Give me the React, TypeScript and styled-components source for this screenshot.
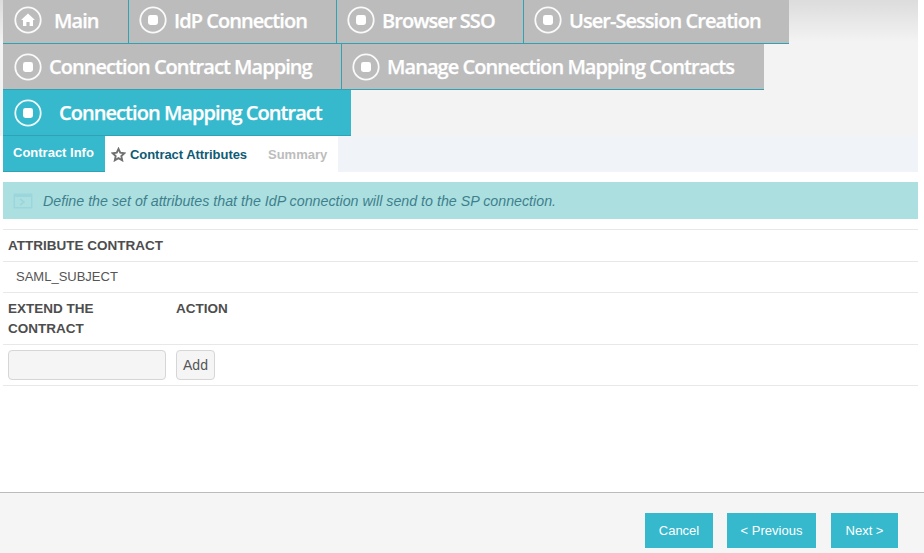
import React from "react";
import styled, { createGlobalStyle } from "styled-components";

const GlobalStyle = createGlobalStyle`
  html, body {
    margin: 0;
    padding: 0;
    background: #fff;
    font-family: "Liberation Sans", Arial, sans-serif;
    color: #555;
  }
`;

const Page = styled.div`
  width: 924px;
  height: 553px;
  display: flex;
  flex-direction: column;
  overflow: hidden;
`;

const Main = styled.div`
  width: 918px;
  height: 492px;
  box-sizing: border-box;
  padding-left: 3px;
`;

const NavArea = styled.div`
  width: 915px;
  margin-left: -3px;
  padding-left: 3px;
  background: linear-gradient(#dcdcdc 0, #f3f3f3 42px);
`;

const NavRow = styled.div<{ $h: number; $lift?: number }>`
  display: flex;
  height: ${(p) => p.$h}px;
  > div {
    padding-bottom: ${(p) => p.$lift ?? 0}px;
  }
`;

const NavTab = styled.div<{ $w: number; $active?: boolean; $gap?: number; $pad?: number }>`
  width: ${(p) => p.$w}px;
  box-sizing: border-box;
  display: flex;
  align-items: center;
  padding-left: ${(p) => p.$pad ?? 11}px;
  gap: ${(p) => p.$gap ?? 7}px;
  background: ${(p) => (p.$active ? "#36b8cd" : "#bcbcbc")};
  border-bottom: 1px solid #2fa2b4;
  border-right: 1px solid #2fa2b4;
  color: #fff;
  font-family: "Open Sans", sans-serif;
  font-weight: 600;
  font-size: 20px;
  letter-spacing: -0.95px;
  -webkit-text-stroke: 0.25px #fff;
  white-space: nowrap;
  &:last-child {
    border-right: none;
  }
`;

const RoundIcon = styled.svg`
  width: 28px;
  height: 28px;
  flex: none;
`;

const StopIcon = () => (
  <RoundIcon viewBox="0 0 28 28">
    <circle cx="14" cy="14" r="12.7" fill="none" stroke="#fff" strokeWidth="1.8" opacity="0.92" />
    <rect x="9" y="9" width="10" height="10" rx="2.4" fill="#fff" />
  </RoundIcon>
);

const HomeIcon = () => (
  <RoundIcon viewBox="0 0 28 28">
    <circle cx="14" cy="14" r="12.7" fill="none" stroke="#fff" strokeWidth="1.8" opacity="0.92" />
    <path d="M14 7.6 L21 14 H19 V20 H15.6 V16 H12.4 V20 H9 V14 H7 Z" fill="#fff" />
  </RoundIcon>
);

const TabBar = styled.div`
  display: flex;
  height: 36px;
  background: #f0f3f8;
`;

const SubTab = styled.div`
  display: flex;
  align-items: center;
  box-sizing: border-box;
  font-weight: 700;
  font-size: 13px;
  white-space: nowrap;
  background: #fff;
  color: #bdbdbd;
`;

const DoneTab = styled(SubTab)`
  width: 102px;
  padding: 0 0 2px 10px;
  background: #36b8cd;
  border-bottom: 1px solid #2fa2b4;
  color: #fff;
`;

const CurrentTab = styled(SubTab)`
  width: 154px;
  padding: 1px 0 0 6px;
  gap: 4px;
  color: #0f5b75;
  letter-spacing: -0.05px;
`;

const PendingTab = styled(SubTab)`
  width: 79px;
  padding: 1px 0 0 9px;
`;

const Banner = styled.div`
  margin-top: 10px;
  height: 37px;
  display: flex;
  align-items: center;
  gap: 10px;
  padding-left: 10px;
  background: #ace0e0;
  color: #3f7f8d;
  font-size: 14.25px;
  font-style: italic;
`;

const Table = styled.div`
  margin-top: 10px;
  border-top: 1px solid #e8e8e8;
`;

const Row = styled.div<{ $h: number }>`
  display: flex;
  height: ${(p) => p.$h}px;
  box-sizing: border-box;
  border-bottom: 1px solid #e8e8e8;
  font-size: 13px;
`;

const Th = styled.div<{ $w?: number }>`
  width: ${(p) => p.$w ?? 168}px;
  box-sizing: border-box;
  padding: 6px 5px 0;
  font-size: 13.5px;
  font-weight: 700;
  line-height: 20px;
  color: #4d4d4d;
  white-space: pre-line;
`;

const Td = styled.div`
  padding: 7px 13px 0;
  line-height: 16px;
  color: #555;
`;

const InputCell = styled.div`
  width: 173px;
  box-sizing: border-box;
  padding: 5px 0 0 5px;
`;

const TextInput = styled.input`
  display: block;
  width: 158px;
  height: 30px;
  box-sizing: border-box;
  background: #f5f5f5;
  border: 1px solid #d6d6d6;
  border-radius: 4px;
`;

const AddButton = styled.button`
  margin-top: 5px;
  width: 39px;
  height: 30px;
  padding: 0;
  box-sizing: border-box;
  background: #f5f5f5;
  border: 1px solid #d6d6d6;
  border-radius: 4px;
  color: #555;
  font-family: "Liberation Sans", Arial, sans-serif;
  font-size: 14px;
`;

const Footer = styled.div`
  flex: 1;
  display: flex;
  justify-content: flex-end;
  gap: 14px;
  padding: 20px 26px 0 0;
  background: #f5f5f5;
  border-top: 1px solid #bbb;
`;

const FooterButton = styled.button<{ $w: number }>`
  width: ${(p) => p.$w}px;
  height: 35px;
  padding: 0;
  border: none;
  background: #36b8cd;
  color: #fff;
  font-family: "Liberation Sans", Arial, sans-serif;
  font-size: 13px;
  &:last-child {
    margin-left: 1px;
  }
`;

const App = () => (
  <Page>
    <GlobalStyle />
    <Main>
      <NavArea>
        <NavRow $h={44} $lift={3}>
          <NavTab $w={126} $gap={12}><HomeIcon />Main</NavTab>
          <NavTab $w={208} $pad={10}><StopIcon />IdP Connection</NavTab>
          <NavTab $w={187} $pad={10}><StopIcon />Browser SSO</NavTab>
          <NavTab $w={265} $pad={10}><StopIcon />User-Session Creation</NavTab>
        </NavRow>
        <NavRow $h={46}>
          <NavTab $w={339} $pad={11}><StopIcon />Connection Contract Mapping</NavTab>
          <NavTab $w={422} $pad={10}><StopIcon />Manage Connection Mapping Contracts</NavTab>
        </NavRow>
        <NavRow $h={46}>
          <NavTab $w={348} $active $gap={17} $pad={11}><StopIcon />Connection Mapping Contract</NavTab>
        </NavRow>
      </NavArea>
      <TabBar>
        <DoneTab>Contract Info</DoneTab>
        <CurrentTab>
          <svg width="15" height="15" viewBox="0 0 24 24" fill="none" stroke="#707070" strokeWidth="3">
            <path d="M12 3 L14.8 9.2 L21.5 10 L16.5 14.6 L17.9 21.3 L12 17.9 L6.1 21.3 L7.5 14.6 L2.5 10 L9.2 9.2 Z" />
          </svg>
          Contract Attributes
        </CurrentTab>
        <PendingTab>Summary</PendingTab>
      </TabBar>
      <Banner>
        <svg width="20" height="16" viewBox="0 0 20 16">
          <rect x="0.5" y="0.5" width="19" height="15" fill="#9ad6dc" />
          <rect x="2" y="4" width="16" height="10" fill="#ace0e0" />
          <path d="M7 6 L11 9 L7 12" fill="none" stroke="#9ad6dc" strokeWidth="1.6" />
        </svg>
        Define the set of attributes that the IdP connection will send to the SP connection.
      </Banner>
      <Table>
        <Row $h={32}><Th $w={300}>ATTRIBUTE CONTRACT</Th></Row>
        <Row $h={31}><Td>SAML_SUBJECT</Td></Row>
        <Row $h={52}>
          <Th>{"EXTEND THE\nCONTRACT"}</Th>
          <Th>ACTION</Th>
        </Row>
        <Row $h={41}>
          <InputCell><TextInput /></InputCell>
          <AddButton>Add</AddButton>
        </Row>
      </Table>
    </Main>
    <Footer>
      <FooterButton $w={68}>Cancel</FooterButton>
      <FooterButton $w={89}>&lt; Previous</FooterButton>
      <FooterButton $w={67}>Next &gt;</FooterButton>
    </Footer>
  </Page>
);

export default App;
